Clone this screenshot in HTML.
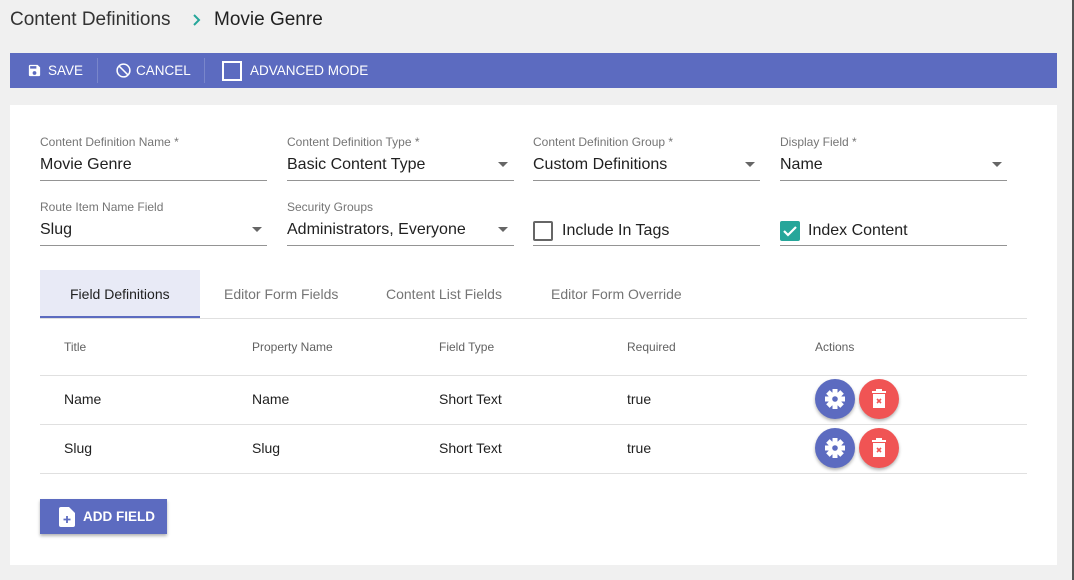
<!DOCTYPE html><html><head><style>
body{margin:0;width:1074px;height:580px;background:#f0f0f0;font-family:"Liberation Sans",sans-serif;position:relative;overflow:hidden}
.a{position:absolute}
.tb{left:10px;top:53px;width:1047px;height:35px;background:#5c6bc0;color:#fff;font-size:13.5px}
.tb span{position:absolute;top:10px}
.sep{position:absolute;top:5px;width:1px;height:25px;background:#7986cb}
.panel{left:10px;top:105px;width:1047px;height:460px;background:#fff}
.lbl{font-size:12px;color:#757575}
.val{font-size:16px;color:#212121}
.ul{height:1px;background:#949494;width:227px}
.dd{width:0;height:0;border-left:5px solid transparent;border-right:5px solid transparent;border-top:5px solid #666}
.th{font-size:12px;color:#616161}
.td{font-size:14px;color:#212121}
.hl{left:40px;width:987px;height:1px;background:#e0e0e0}
.circ{width:40px;height:40px;border-radius:50%;box-shadow:0 2px 3px rgba(0,0,0,.3)}
.tab{font-size:14px;color:#757575;top:286px}
</style></head><body>
<div class="a" style="left:10px;top:9px;font-size:19px;color:#333">Content Definitions</div>
<svg class="a" style="left:192px;top:14px" width="10" height="12" viewBox="0 0 10 12"><path d="M2 1l5 5-5 5" fill="none" stroke="#26a69a" stroke-width="2"/></svg>
<div class="a" style="left:214px;top:9px;font-size:19px;color:#212121">Movie Genre</div>
<div class="a tb">
<svg class="a" style="left:17px;top:10px" width="15" height="15" viewBox="0 0 24 24"><path fill="#fff" d="M17 3H5a2 2 0 0 0-2 2v14a2 2 0 0 0 2 2h14a2 2 0 0 0 2-2V7l-4-4zm-5 16a3 3 0 1 1 0-6 3 3 0 0 1 0 6zm3-10H5V5h10v4z"/></svg>
<span style="left:38px">SAVE</span><div class="sep" style="left:87px"></div>
<svg class="a" style="left:105px;top:9px" width="17" height="17" viewBox="0 0 24 24"><circle cx="12" cy="12" r="9" fill="none" stroke="#fff" stroke-width="2.2"/><path d="M6 6l12 12" stroke="#fff" stroke-width="2.2"/></svg>
<span style="left:126px">CANCEL</span><div class="sep" style="left:194px"></div>
<div class="a" style="left:212px;top:8px;width:16px;height:16px;border:2px solid #fff"></div>
<span style="left:240px">ADVANCED MODE</span>
</div>
<div class="a panel"></div>
<div class="a lbl" style="left:40px;top:135px">Content Definition Name *</div>
<div class="a val" style="left:40px;top:156px">Movie Genre</div>
<div class="a ul" style="left:40px;top:180px"></div>
<div class="a lbl" style="left:287px;top:135px">Content Definition Type *</div>
<div class="a val" style="left:287px;top:156px">Basic Content Type</div>
<div class="a dd" style="left:498px;top:162px"></div>
<div class="a ul" style="left:287px;top:180px"></div>
<div class="a lbl" style="left:533px;top:135px">Content Definition Group *</div>
<div class="a val" style="left:533px;top:156px">Custom Definitions</div>
<div class="a dd" style="left:745px;top:162px"></div>
<div class="a ul" style="left:533px;top:180px"></div>
<div class="a lbl" style="left:780px;top:135px">Display Field *</div>
<div class="a val" style="left:780px;top:156px">Name</div>
<div class="a dd" style="left:992px;top:162px"></div>
<div class="a ul" style="left:780px;top:180px"></div>
<div class="a lbl" style="left:40px;top:200px">Route Item Name Field</div>
<div class="a val" style="left:40px;top:221px">Slug</div>
<div class="a dd" style="left:252px;top:227px"></div>
<div class="a ul" style="left:40px;top:245px"></div>
<div class="a lbl" style="left:287px;top:200px">Security Groups</div>
<div class="a val" style="left:287px;top:221px">Administrators, Everyone</div>
<div class="a dd" style="left:498px;top:227px"></div>
<div class="a ul" style="left:287px;top:245px"></div>
<div class="a" style="left:533px;top:221px;width:16px;height:16px;border:2px solid #666;border-radius:2px"></div>
<div class="a val" style="left:562px;top:222px">Include In Tags</div>
<div class="a ul" style="left:533px;top:245px"></div>
<div class="a" style="left:780px;top:221px;width:20px;height:20px;background:#26a69a;border-radius:2px"><svg width="20" height="20" viewBox="0 0 20 20"><path d="M4 10l4 4 8-8" fill="none" stroke="#fff" stroke-width="2.2"/></svg></div>
<div class="a val" style="left:808px;top:222px">Index Content</div>
<div class="a ul" style="left:780px;top:245px"></div>
<div class="a" style="left:40px;top:270px;width:160px;height:46px;background:#e8eaf6;border-bottom:3px solid #5c6bc0"></div>
<div class="a hl" style="top:318px"></div>
<div class="a tab" style="left:70px;color:#212121">Field Definitions</div>
<div class="a tab" style="left:224px">Editor Form Fields</div>
<div class="a tab" style="left:386px">Content List Fields</div>
<div class="a tab" style="left:551px">Editor Form Override</div>
<div class="a th" style="left:64px;top:340px">Title</div>
<div class="a th" style="left:252px;top:340px">Property Name</div>
<div class="a th" style="left:439px;top:340px">Field Type</div>
<div class="a th" style="left:627px;top:340px">Required</div>
<div class="a th" style="left:815px;top:340px">Actions</div>
<div class="a hl" style="top:375px"></div>
<div class="a td" style="left:64px;top:391px">Name</div>
<div class="a td" style="left:252px;top:391px">Name</div>
<div class="a td" style="left:439px;top:391px">Short Text</div>
<div class="a td" style="left:627px;top:391px">true</div>
<div class="a hl" style="top:424px"></div>
<div class="a td" style="left:64px;top:440px">Slug</div>
<div class="a td" style="left:252px;top:440px">Slug</div>
<div class="a td" style="left:439px;top:440px">Short Text</div>
<div class="a td" style="left:627px;top:440px">true</div>
<div class="a hl" style="top:473px"></div>
<div class="a circ" style="left:815px;top:379px;background:#5c6bc0"><svg width="40" height="40" viewBox="-20 -20 40 40"><g fill="#fff"><circle r="7"/><g id="t"><rect x="-2.5" y="-10" width="5" height="20"/><rect x="-10" y="-2.5" width="20" height="5"/></g><use href="#t" transform="rotate(45)"/></g><circle r="2.8" fill="#5c6bc0"/></svg></div>
<div class="a circ" style="left:859px;top:379px;background:#f05454"><svg width="40" height="40" viewBox="0 0 40 40"><rect x="13" y="12" width="14" height="2" fill="#fff"/><rect x="17" y="10" width="6" height="2" fill="#fff"/><rect x="14" y="15" width="12" height="14" fill="#fff"/><path d="M18 20l4 4M22 20l-4 4" stroke="#f05454" stroke-width="1.6"/></svg></div>
<div class="a circ" style="left:815px;top:428px;background:#5c6bc0"><svg width="40" height="40" viewBox="-20 -20 40 40"><g fill="#fff"><circle r="7"/><use href="#t"/><use href="#t" transform="rotate(45)"/></g><circle r="2.8" fill="#5c6bc0"/></svg></div>
<div class="a circ" style="left:859px;top:428px;background:#f05454"><svg width="40" height="40" viewBox="0 0 40 40"><rect x="13" y="12" width="14" height="2" fill="#fff"/><rect x="17" y="10" width="6" height="2" fill="#fff"/><rect x="14" y="15" width="12" height="14" fill="#fff"/><path d="M18 20l4 4M22 20l-4 4" stroke="#f05454" stroke-width="1.6"/></svg></div>
<div class="a" style="left:40px;top:499px;width:127px;height:35px;background:#5c6bc0;box-shadow:0 2px 3px rgba(0,0,0,.3);color:#fff;font-size:13.5px;font-weight:bold">
<svg class="a" style="left:19px;top:8px" width="16" height="20" viewBox="0 0 16 20"><path d="M2 0h8l6 6v12a2 2 0 0 1-2 2H2a2 2 0 0 1-2-2V2a2 2 0 0 1 2-2z" fill="#fff"/><path d="M8 9v7M4.5 12.5h7" stroke="#5c6bc0" stroke-width="1.8"/></svg>
<span class="a" style="left:43px;top:10px">ADD FIELD</span></div>
<div class="a" style="left:1072px;top:0;width:2px;height:580px;background:#555"></div>
</body></html>
